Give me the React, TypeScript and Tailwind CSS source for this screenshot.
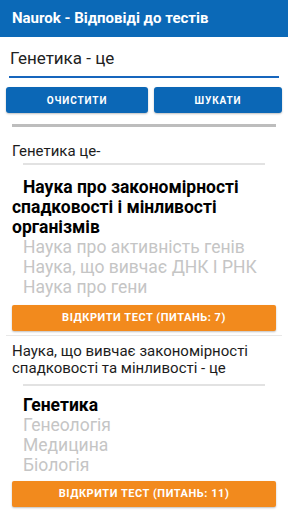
import React from 'react';

interface ResultProps {
  question: string;
  answer: string;
  wrong: string[];
  count: number;
  indent?: boolean;
}

const font = { fontFamily: 'Roboto, "Noto Sans", sans-serif' };

const ResultCard: React.FC<ResultProps> = ({ question, answer, wrong, count, indent }) => (
  <div>
    <p className="px-3 text-[15px] leading-[17px] text-[#1c1c1c]">{question}</p>
    <div className={`mx-[23px] h-[2px] bg-[#e2e2e2] ${indent ? 'mt-[3px]' : 'mt-[7px]'}`} />
    <div className={indent ? 'mt-[12px]' : 'mt-[9px]'}>
      <p
        className={`text-[17.5px] leading-[20px] font-bold text-black ${indent ? 'px-3 indent-[11px]' : 'pl-[23px] pr-3'}`}
      >
        {answer}
      </p>
      {wrong.map((w) => (
        <p key={w} className="pl-[23px] pr-3 text-[17.5px] leading-[20px] text-[#c5c5c5]">
          {w}
        </p>
      ))}
    </div>
    <button
      className={`mx-3 w-[264px] h-[26px] rounded-[2px] bg-[#f28a1d] shadow-[0_1px_2px_rgba(0,0,0,0.25)] text-white text-[11px] font-bold tracking-[0.05em] ${indent ? 'mt-2' : 'mt-[6px]'}`}
    >
      ВІДКРИТИ ТЕСТ (ПИТАНЬ: {count})
    </button>
  </div>
);

export default function App() {
  return (
    <div className="w-[288px] h-[512px] overflow-hidden bg-white" style={font}>
      {/* Header */}
      <div className="h-[37px] bg-[#0b69b7] flex items-center px-3">
        <h1 className="text-white text-[15px] font-bold">Naurok - Відповіді до тестів</h1>
      </div>

      {/* Search field */}
      <div className="mx-[9px] h-[41px] border-b-2 border-[#1766bd] flex items-end pb-[8px]">
        <span className="pl-px text-[17px] leading-[20px] text-[#222]">Генетика - це</span>
      </div>

      {/* Buttons */}
      <div className="mt-[9px] flex gap-[6px] px-[6px]">
        <button className="w-[142px] h-[26px] rounded-[3px] bg-[#0b67b6] shadow-[0_1px_2px_rgba(0,0,0,0.25)] text-white text-[10px] font-bold tracking-[0.09em]">
          ОЧИСТИТИ
        </button>
        <button className="w-[128px] h-[26px] rounded-[3px] bg-[#0b67b6] shadow-[0_1px_2px_rgba(0,0,0,0.25)] text-white text-[10px] font-bold tracking-[0.09em]">
          ШУКАТИ
        </button>
      </div>

      <div className="mt-[11px] mx-3 h-[3px] bg-[#bdbdbd]" />

      <div className="mt-[16px]">
        <ResultCard
          question="Генетика це-"
          answer="Наука про закономірності спадковості і мінливості організмів"
          wrong={['Наука про активність генів', 'Наука, що вивчає ДНК І РНК', 'Наука про гени']}
          count={7}
          indent
        />
      </div>

      <div className="mt-[4px] mx-[6px] h-px bg-[#e8e8e8]" />

      <div className="mt-[7px]">
        <ResultCard
          question="Наука, що вивчає закономірності спадковості та мінливості - це"
          answer="Генетика"
          wrong={['Генеологія', 'Медицина', 'Біологія']}
          count={11}
        />
      </div>
    </div>
  );
}
